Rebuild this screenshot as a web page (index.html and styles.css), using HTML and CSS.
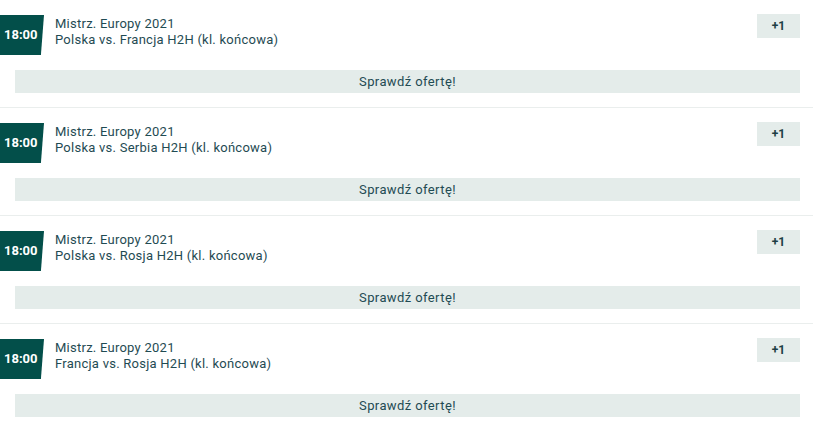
FILE: index.html
```html
<!DOCTYPE html>
<html lang="pl">
<head>
    <meta charset="UTF-8">
    <meta name="viewport" content="width=device-width, initial-scale=1.0">
    <title>Mecze</title>
    <link rel="stylesheet" href="styles.css">
</head>
<body>
    <div class="events">
        <div class="event">
            <div class="event-head">
                <div class="time">18:00</div>
                <div class="info">
                    <div class="league">Mistrz. Europy 2021</div>
                    <div class="match">Polska vs. Francja H2H (kl. końcowa)</div>
                </div>
                <div class="more">+1</div>
            </div>
            <div class="offer">Sprawdź ofertę!</div>
        </div>
        <div class="event">
            <div class="event-head">
                <div class="time">18:00</div>
                <div class="info">
                    <div class="league">Mistrz. Europy 2021</div>
                    <div class="match">Polska vs. Serbia H2H (kl. końcowa)</div>
                </div>
                <div class="more">+1</div>
            </div>
            <div class="offer">Sprawdź ofertę!</div>
        </div>
        <div class="event">
            <div class="event-head">
                <div class="time">18:00</div>
                <div class="info">
                    <div class="league">Mistrz. Europy 2021</div>
                    <div class="match">Polska vs. Rosja H2H (kl. końcowa)</div>
                </div>
                <div class="more">+1</div>
            </div>
            <div class="offer">Sprawdź ofertę!</div>
        </div>
        <div class="event">
            <div class="event-head">
                <div class="time">18:00</div>
                <div class="info">
                    <div class="league">Mistrz. Europy 2021</div>
                    <div class="match">Francja vs. Rosja H2H (kl. końcowa)</div>
                </div>
                <div class="more">+1</div>
            </div>
            <div class="offer">Sprawdź ofertę!</div>
        </div>
    </div>
</body>
</html>
```

FILE: styles.css
```css
body {
    margin: 0;
    background: #fff;
    font-family: Roboto, "Liberation Sans", sans-serif;
    color: #1f4b53;
}
.event {
    padding: 15px 13px 14px 0;
    border-bottom: 1px solid #eaeeed;
}
.event-head { display: flex; align-items: flex-start; height: 40px; }
.time {
    width: 44px;
    height: 40px;
    background: #034f4a;
    color: #fff;
    font-weight: 700;
    font-size: 13px;
    line-height: 40px;
    padding-left: 4px;
    box-sizing: border-box;
    clip-path: polygon(0 0, 100% 0, 93% 100%, 0 100%);
}
.info {
    flex: 1;
    margin-left: 11px;
    font-size: 13px;
    letter-spacing: 0.25px;
    line-height: 16px;
    padding-top: 1px;
}
.more {
    width: 43px;
    height: 24px;
    margin-top: -1px;
    background: #e4ecea;
    font-size: 12px;
    font-weight: 700;
    line-height: 24px;
    text-align: center;
    color: #1d3f45;
}
.offer {
    margin: 15px 0 0 15px;
    height: 23px;
    line-height: 23px;
    background: #e4ecea;
    text-align: center;
    font-size: 13px;
    letter-spacing: 0.4px;
}
```
